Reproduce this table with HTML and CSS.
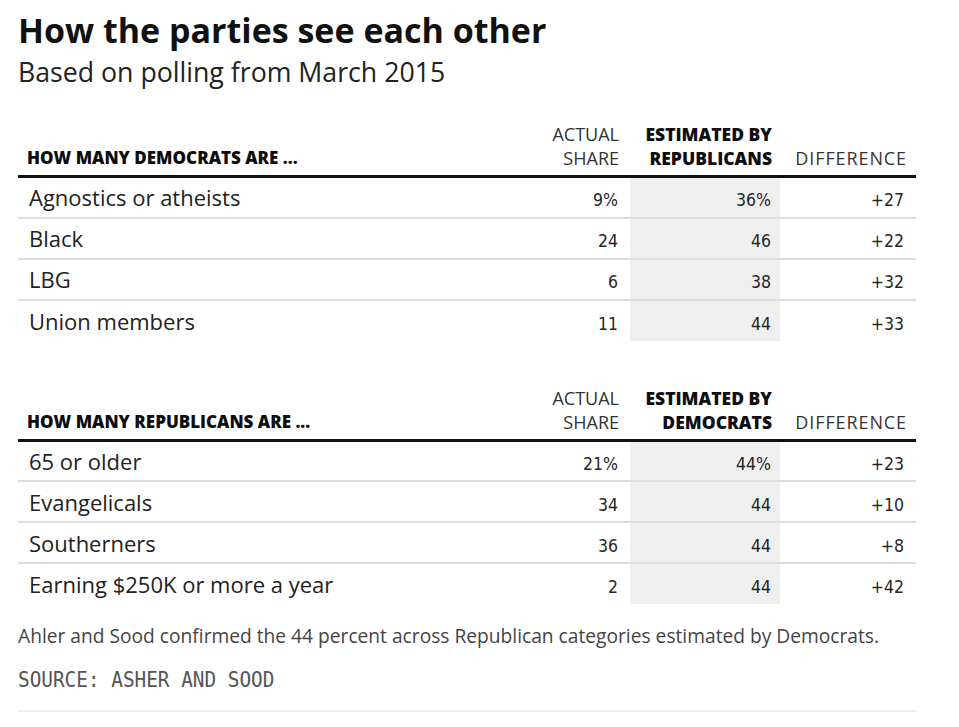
FILE: index.html
```html
<!DOCTYPE html>
<html lang="en">
<head>
<meta charset="utf-8">
<title>How the parties see each other</title>
<link rel="stylesheet" href="styles.css">
</head>
<body>
<main class="graphic">
  <h1 class="title">How the parties see each other</h1>
  <p class="subtitle">Based on polling from March 2015</p>

  <table class="data">
    <thead>
      <tr>
        <th class="label-head">HOW MANY DEMOCRATS ARE ...</th>
        <th class="num-head col-actual">ACTUAL<br>SHARE</th>
        <th class="num-head col-est strong">ESTIMATED BY<br>REPUBLICANS</th>
        <th class="num-head col-diff">DIFFERENCE</th>
      </tr>
    </thead>
    <tbody>
      <tr><td class="label">Agnostics or atheists</td><td class="num">9%</td><td class="num est">36%</td><td class="num diff">+27</td></tr>
      <tr><td class="label">Black</td><td class="num">24</td><td class="num est">46</td><td class="num diff">+22</td></tr>
      <tr><td class="label">LBG</td><td class="num">6</td><td class="num est">38</td><td class="num diff">+32</td></tr>
      <tr><td class="label">Union members</td><td class="num">11</td><td class="num est">44</td><td class="num diff">+33</td></tr>
    </tbody>
  </table>

  <table class="data second">
    <thead>
      <tr>
        <th class="label-head">HOW MANY REPUBLICANS ARE ...</th>
        <th class="num-head col-actual">ACTUAL<br>SHARE</th>
        <th class="num-head col-est strong">ESTIMATED BY<br>DEMOCRATS</th>
        <th class="num-head col-diff">DIFFERENCE</th>
      </tr>
    </thead>
    <tbody>
      <tr><td class="label">65 or older</td><td class="num">21%</td><td class="num est">44%</td><td class="num diff">+23</td></tr>
      <tr><td class="label">Evangelicals</td><td class="num">34</td><td class="num est">44</td><td class="num diff">+10</td></tr>
      <tr><td class="label">Southerners</td><td class="num">36</td><td class="num est">44</td><td class="num diff">+8</td></tr>
      <tr><td class="label">Earning $250K or more a year</td><td class="num">2</td><td class="num est">44</td><td class="num diff">+42</td></tr>
    </tbody>
  </table>

  <p class="note">Ahler and Sood confirmed the 44 percent across Republican categories estimated by Democrats.</p>
  <p class="source"><span class="source-text">SOURCE: ASHER AND SOOD</span></p>
  <div class="rule"></div>
</main>
</body>
</html>
```
FILE: styles.css
```css
html, body {
  margin: 0;
  padding: 0;
  background: #ffffff;
}

body {
  font-family: "Open Sans", "Noto Sans", "Liberation Sans", sans-serif;
  color: #222;
}

.graphic {
  width: 898px;
  padding: 10px 0 0 18px;
}

.title {
  margin: 0;
  font-size: 34px;
  line-height: 40px;
  font-weight: 700;
  color: #111;
}

.subtitle {
  margin: 6px 0 0;
  font-size: 26.7px;
  line-height: 32px;
  font-weight: 400;
  color: #222;
}

.data {
  width: 898px;
  margin-top: 34px;
  border-collapse: collapse;
  table-layout: fixed;
}

.data.second {
  margin-top: 45px;
}

.data thead tr {
  border-bottom: 3px solid #111;
}

.data th {
  vertical-align: bottom;
  padding: 0 0 5px;
  font-size: 18px;
  line-height: 24px;
}

.label-head {
  text-align: left;
  padding-left: 9px !important;
  font-size: 17px !important;
  font-weight: 800;
  color: #0d0d0d;
}

.num-head {
  text-align: right;
  font-weight: 400;
  color: #333;
  white-space: nowrap;
}

.num-head.strong {
  font-weight: 800;
  color: #0d0d0d;
  font-size: 17.5px;
}

.col-actual {
  width: 89px;
  padding-right: 11px !important;
}

.col-est {
  width: 142px;
  padding-right: 8px !important;
}

.col-diff {
  width: 127px;
  padding-right: 9px !important;
  letter-spacing: 0.9px;
}

.data tbody tr {
  height: 41px;
  border-bottom: 2px solid #dcdcdc;
}

.data tbody tr:last-child {
  border-bottom: none;
}

.data td {
  padding: 0;
  vertical-align: middle;
}

.label {
  padding-left: 11px !important;
  font-size: 22px;
  line-height: 30px;
  color: #222;
}

.num {
  text-align: right;
  padding-top: 6px !important;
  padding-right: 12px !important;
  font-family: "DejaVu Sans Condensed", "Liberation Sans Narrow", sans-serif;
  font-size: 17.5px;
  line-height: 30px;
  color: #262626;
}

.num.est {
  background: #efefef;
  padding-right: 9px !important;
}

.note {
  margin: 20px 0 0;
  font-size: 19.2px;
  line-height: 24px;
  color: #444;
}

.source {
  margin: 19px 0 0;
  line-height: 26px;
  height: 26px;
}

.source-text {
  display: inline-block;
  font-family: "DejaVu Sans Mono", "Liberation Mono", monospace;
  font-size: 22px;
  line-height: 26px;
  color: #555;
  transform: scaleX(0.88);
  transform-origin: 0 50%;
}

.rule {
  margin-top: 17px;
  height: 2px;
  background: #eeeeee;
}
```
